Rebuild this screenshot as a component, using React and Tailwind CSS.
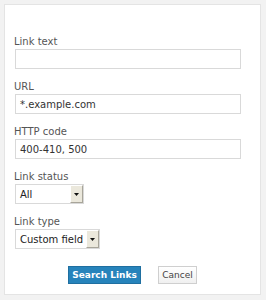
import React from "react";

const font = { fontFamily: '"DejaVu Sans", Verdana, sans-serif' };

const Field = ({ label, children }) => (
    <div className="flex flex-col">
        <label className="text-[10px] leading-[12px] text-[#555]">{label}</label>
        <div className="mt-px">{children}</div>
    </div>
);

const TextInput = ({ value }) => (
    <div className="ml-px w-[226px] h-[20px] border border-[#d9d9d9] bg-white pl-[4px] flex items-center text-[10px] text-[#333]">
        {value}
    </div>
);

const Select = ({ value, width }) => (
    <div className={`ml-px h-[20px] border border-[#d9d9d9] bg-white flex items-stretch ${width}`}>
        <div className="flex-1 pl-[4px] flex items-center text-[10px] text-[#222]">{value}</div>
        <div className="w-[13px] bg-[#ebe8dc] border-l border-t border-white border-r border-r-[#a8a59a] border-b border-b-[#a8a59a] flex items-center justify-center">
            <svg width="5" height="3" viewBox="0 0 5 3">
                <path d="M0 0h5L2.5 3z" fill="#111" />
            </svg>
        </div>
    </div>
);

export default function App() {
    return (
        <div className="w-[266px] h-[300px] bg-[#f2f2f2] pt-[4px] pl-[4px]" style={font}>
            <div className="w-[257px] h-[291px] bg-white border border-[#e4e4e4] pl-[9px] pt-[31px]">
                <div className="flex flex-col gap-[12px]">
                    <Field label="Link text">
                        <TextInput value="" />
                    </Field>
                    <Field label="URL">
                        <TextInput value="*.example.com" />
                    </Field>
                    <Field label="HTTP code">
                        <TextInput value="400-410, 500" />
                    </Field>
                    <Field label="Link status">
                        <Select value="All" width="w-[69px]" />
                    </Field>
                    <Field label="Link type">
                        <Select value="Custom field" width="w-[85px]" />
                    </Field>
                </div>
                <div className="flex justify-center gap-[17px] mt-[17px] -ml-[9px]">
                    <button className="w-[73px] h-[18px] bg-[#2683bb] border border-[#1f6fa0] text-white font-bold text-[9px] leading-none">
                        Search Links
                    </button>
                    <button className="w-[39px] h-[18px] bg-gradient-to-b from-white to-[#f0f0f0] border border-[#cfcfcf] text-[#444] text-[9px] leading-none">
                        Cancel
                    </button>
                </div>
            </div>
        </div>
    );
}
